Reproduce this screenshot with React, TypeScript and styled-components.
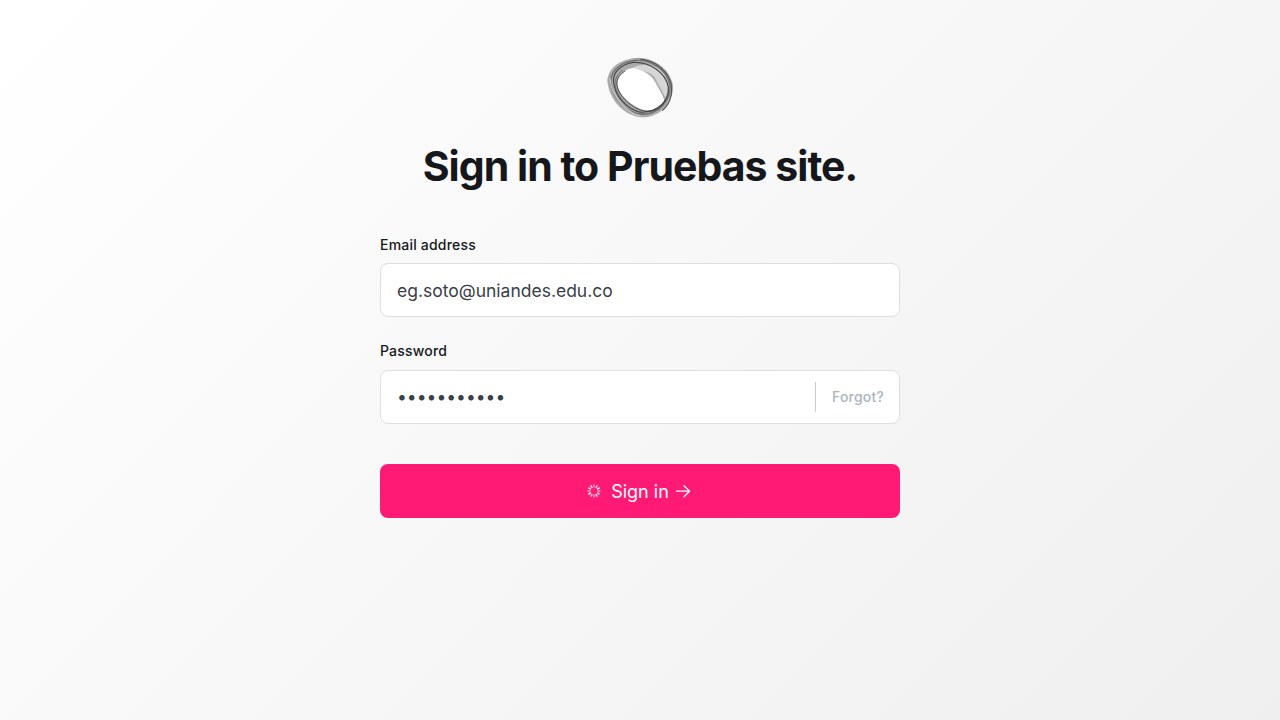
import React from "react";
import styled, { createGlobalStyle } from "styled-components";

const Global = createGlobalStyle`
  html, body { margin: 0; padding: 0; height: 100%; }
  body { font-family: Inter, "Liberation Sans", sans-serif; }
  #root { height: 100%; }
`;

const Page = styled.div`
  box-sizing: border-box;
  min-height: 720px;
  background: linear-gradient(135deg, #ffffff 0%, #efefef 100%);
  display: flex;
  flex-direction: column;
  align-items: center;
  padding-top: 56px;
`;

const Logo = styled.svg`
  display: block;
  width: 68px;
  height: 64px;
  filter: blur(0.3px);
`;

const Title = styled.h1`
  margin: 20px 0 0;
  font-size: 41px;
  line-height: 52px;
  font-weight: 700;
  letter-spacing: -0.96px;
  color: #15171a;
`;

const Form = styled.form`
  width: 520px;
  margin-top: 43.6px;
  display: flex;
  flex-direction: column;
`;

const Field = styled.div`
  display: flex;
  flex-direction: column;
  margin-bottom: 24.8px;
`;

const Label = styled.label`
  font-size: 14px;
  line-height: 17px;
  font-weight: 500;
  letter-spacing: 0.2px;
  color: #15171a;
  margin-bottom: 10.8px;
`;

const InputBox = styled.div`
  box-sizing: border-box;
  height: 54px;
  display: flex;
  align-items: center;
  background: #fff;
  border: 1px solid #dddee0;
  border-radius: 8px;
  padding: 0 15px 0 16px;
`;

const Input = styled.input`
  flex: 1;
  min-width: 0;
  border: 0;
  outline: 0;
  padding: 0;
  background: transparent;
  font-family: inherit;
  font-size: 17.5px;
  color: #394047;
`;

const Forgot = styled.span`
  align-self: center;
  height: 30px;
  display: flex;
  align-items: center;
  border-left: 1px solid #c9ccd0;
  padding-left: 16px;
  font-size: 14px;
  font-weight: 500;
  letter-spacing: 0.2px;
  color: #abb4be;
`;

const Submit = styled.button`
  box-sizing: border-box;
  height: 54px;
  margin-top: 15.2px;
  padding: 1px 0 0;
  border: 0;
  border-radius: 8px;
  background: #ff1a75;
  color: #fff;
  font-family: inherit;
  font-size: 18px;
  display: flex;
  align-items: center;
  justify-content: center;
  gap: 10px;
`;

const Ring = () => (
  <Logo viewBox="48 33 202 190" fill="none">
    <path d="M145 38C190 40 235 68 246 115C252 165 215 215 155 215C100 212 55 160 52 105C55 65 95 40 145 38Z" fill="#ababab" />
    <path d="M140 45C185 44 228 75 238 118C243 160 208 206 155 206C105 203 65 155 62 108C63 72 98 48 140 45Z" stroke="#707070" strokeWidth="4" />
    <path d="M60 100C62 140 95 195 150 212" stroke="#d0d0d0" strokeWidth="3" />
    <path d="M104 78C118 66 135 66 150 74C168 82 185 92 195 112C205 132 218 150 222 168C212 184 190 196 165 194C135 190 84 152 82 115C82 98 92 86 104 78Z" fill="#ffffff" />
    <path d="M128 68C142 58 170 56 195 66C216 76 230 94 232 118C232 132 229 145 224 156C214 135 205 120 192 95C180 82 150 74 128 68Z" fill="#d6d6d6" />
    <path d="M128 52C175 48 226 82 233 125C238 162 205 200 155 200C110 196 72 150 70 106C70 78 95 58 128 52Z" stroke="#4a4a4a" strokeWidth="3.5" />
    <path d="M150 42C195 46 238 80 243 125C246 150 235 180 215 195" stroke="#4f4f4f" strokeWidth="3" />
    <path d="M104 78C88 88 80 100 80 116C83 152 128 192 165 197C192 199 216 186 226 160" stroke="#3c3c3c" strokeWidth="2.5" />
    <path d="M98 74C82 86 74 102 75 118C80 158 125 200 160 203" stroke="#555555" strokeWidth="2" />
  </Logo>
);

const Spinner = () => (
  <svg width="14" height="14" viewBox="0 0 14 14" stroke="#fff" strokeWidth="1.5">
    {Array.from({ length: 12 }).map((_, i) => (
      <line key={i} x1="7" y1="0.5" x2="7" y2="3.5" opacity={0.55 + (i % 3) * 0.2} transform={`rotate(${i * 30} 7 7)`} />
    ))}
  </svg>
);

const Arrow = () => (
  <svg width="16" height="14" viewBox="0 0 16 14" fill="none" stroke="#fff" strokeWidth="1.3" strokeLinecap="round" strokeLinejoin="round">
    <path d="M1.5 7.2H14.5M9 1.7L14.5 7.2L9 12.7" />
  </svg>
);

const SignInLabel = styled.span`
  display: inline-flex;
  align-items: center;
  gap: 6px;
  padding-right: 2px;
`;

export default function App() {
  return (
    <Page>
      <Global />
      <Ring />
      <Title>Sign in to Pruebas site.</Title>
      <Form onSubmit={(e) => e.preventDefault()}>
        <Field>
          <Label>Email address</Label>
          <InputBox>
            <Input type="email" readOnly value="eg.soto@uniandes.edu.co" />
          </InputBox>
        </Field>
        <Field>
          <Label>Password</Label>
          <InputBox>
            <Input type="password" readOnly value="***********" />
            <Forgot>Forgot?</Forgot>
          </InputBox>
        </Field>
        <Submit type="submit">
          <Spinner />
          <SignInLabel>Sign in <Arrow /></SignInLabel>
        </Submit>
      </Form>
    </Page>
  );
}
